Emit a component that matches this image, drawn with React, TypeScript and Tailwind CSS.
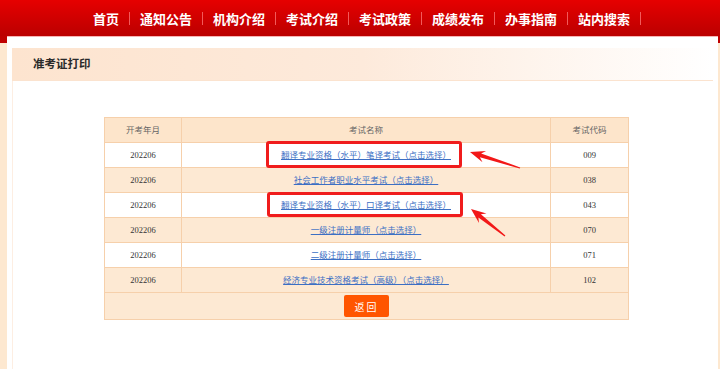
const navItems = ["首页", "通知公告", "机构介绍", "考试介绍", "考试政策", "成绩发布", "办事指南", "站内搜索"];

const exams = [
  { month: "202206", name: "翻译专业资格（水平）笔译考试（点击选择）", code: "009" },
  { month: "202206", name: "社会工作者职业水平考试（点击选择）", code: "038" },
  { month: "202206", name: "翻译专业资格（水平）口译考试（点击选择）", code: "043" },
  { month: "202206", name: "一级注册计量师（点击选择）", code: "070" },
  { month: "202206", name: "二级注册计量师（点击选择）", code: "071" },
  { month: "202206", name: "经济专业技术资格考试（高级）（点击选择）", code: "102" },
];

const cellFont = { fontFamily: '"Liberation Serif", "Noto Sans CJK SC", serif' };

// barbed arrow with a tapering shaft, tip -> tail in table coordinates
function arrowPoints(tx: number, ty: number, ex: number, ey: number) {
  const len = Math.hypot(ex - tx, ey - ty);
  const ux = (ex - tx) / len;
  const uy = (ey - ty) / len;
  const nx = -uy;
  const ny = ux;
  const p = (a: number, b: number) => `${(tx + ux * a + nx * b).toFixed(1)},${(ty + uy * a + ny * b).toFixed(1)}`;
  return [
    p(0, 0),
    p(15, 6),
    p(11, 2),
    p(len, 0.6),
    p(len, -0.6),
    p(11, -2),
    p(15, -6),
  ].join(" ");
}

export default function App() {
  return (
    <div className="w-[720px] h-[369px] overflow-hidden bg-[#fde8d0] flex flex-col">
      {/* top nav */}
      <header className="h-[36px] shrink-0 bg-gradient-to-b from-[#e60000] to-[#bb0000] flex items-center pl-[83px]">
        {navItems.map((item) => (
          <div key={item} className="flex items-center">
            <span
              className="px-[10px] text-[13px] font-bold text-white leading-none"
              style={{ fontFamily: '"Noto Sans CJK SC", sans-serif' }}
            >
              {item}
            </span>
            <span className="w-px h-[13px] bg-[#f25a5a]" />
          </div>
        ))}
      </header>

      {/* page body */}
      <div className="flex-1 flex bg-[linear-gradient(#bf0000_0,#bf0000_7px,#fde8d0_7px)] pl-[7px] pr-[2px]">
        <main className="flex-1 bg-white border-t border-[#f6b4b4] pt-[11px] px-[5px] flex flex-col">
          <div className="h-[33px] shrink-0 flex items-center pl-[21px] bg-gradient-to-r from-[#fde4cf] via-[#fdeadb] to-white border-b border-[#fbe3cf]">
            <span
              className="text-[11.5px] font-bold text-[#2a2a2a]"
              style={{ fontFamily: '"Noto Sans CJK SC", sans-serif' }}
            >
              准考证打印
            </span>
          </div>

          <div className="flex-1 border-l border-[#fdeee2] pt-[36px] pl-[91px]">
            <div className="relative w-[525px]">
              <table className="w-full border-collapse text-[8.5px]" style={cellFont}>
                <thead>
                  <tr className="h-[25px] bg-[#fde5cb] text-[#666]">
                    <th className="w-[77px] border border-[#f6d0ab] font-normal">开考年月</th>
                    <th className="border border-[#f6d0ab] font-normal">考试名称</th>
                    <th className="w-[78px] border border-[#f6d0ab] font-normal">考试代码</th>
                  </tr>
                </thead>
                <tbody>
                  {exams.map((e, i) => (
                    <tr key={e.code} className={`h-[25px] text-[#333] ${i % 2 === 0 ? "bg-white" : "bg-[#fde9d3]"}`}>
                      <td className="border border-[#f6d0ab] text-center">{e.month}</td>
                      <td className="border border-[#f6d0ab] text-center">
                        <a className="text-[#3c6fc4] underline">{e.name}</a>
                      </td>
                      <td className="border border-[#f6d0ab] text-center">{e.code}</td>
                    </tr>
                  ))}
                  <tr className="h-[27px] bg-[#fde9d3]">
                    <td colSpan={3} className="border border-[#f6d0ab] text-center">
                      <button
                        className="w-[45px] h-[22px] rounded-[2px] bg-[#ff5500] text-white text-[10px] tracking-[2px] align-middle"
                        style={{ fontFamily: '"Noto Sans CJK SC", sans-serif' }}
                      >
                        返回
                      </button>
                    </td>
                  </tr>
                </tbody>
              </table>

              {/* annotations */}
              <div className="absolute left-[162px] top-[24px] w-[196px] h-[27px] border-[3px] border-[#f01c1c] rounded-[3px]" />
              <div className="absolute left-[163px] top-[75px] w-[196px] h-[25px] border-[3px] border-[#f01c1c] rounded-[3px]" />
              <svg className="absolute inset-0 w-full h-full pointer-events-none overflow-visible">
                <polygon points={arrowPoints(366, 35, 416, 51)} fill="#f21818" />
                <polygon points={arrowPoints(367, 92, 401, 119)} fill="#f21818" />
              </svg>
            </div>
          </div>
        </main>
      </div>
    </div>
  );
}
